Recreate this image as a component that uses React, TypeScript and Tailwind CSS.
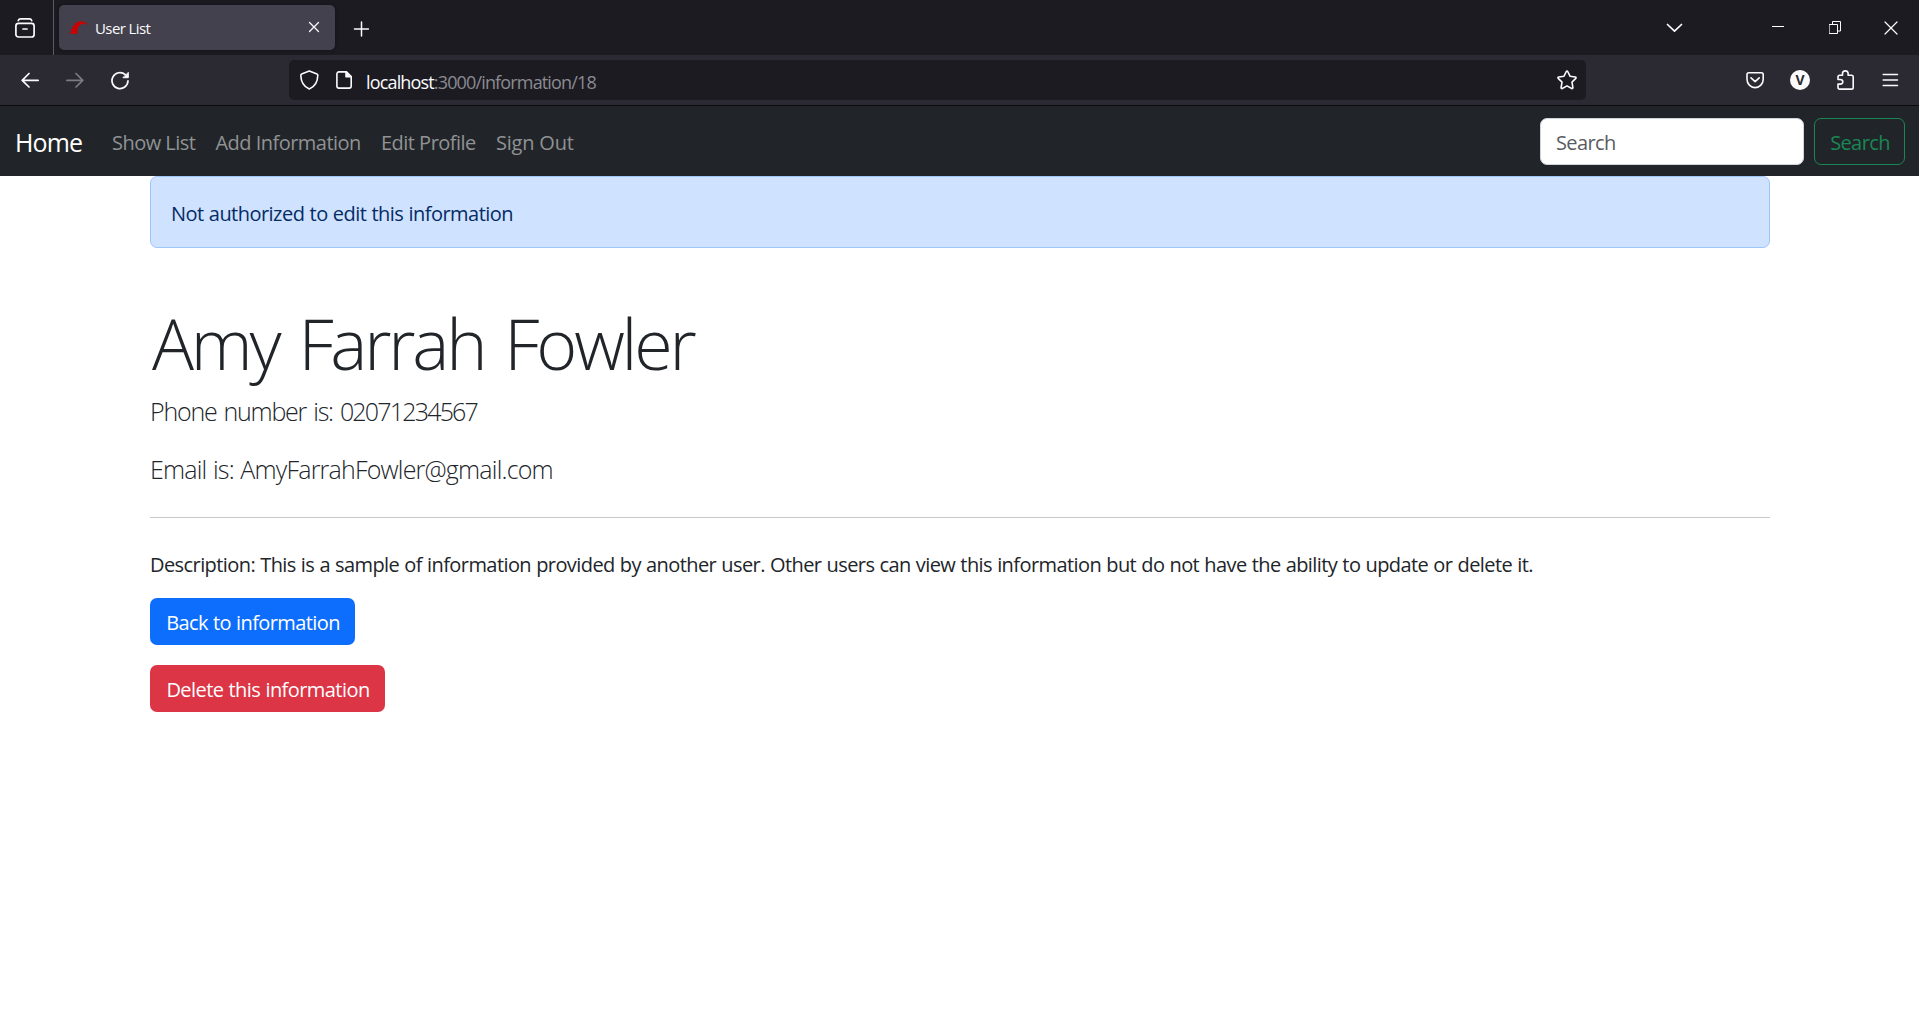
import type { ReactNode } from "react";

type IconProps = { w: number; h: number; className?: string; sw?: number; children: ReactNode };

function Icon({ w, h, className = "", sw = 1.5, children }: IconProps) {
  return (
    <svg
      width={w}
      height={h}
      viewBox={`0 0 ${w} ${h}`}
      fill="none"
      stroke="currentColor"
      strokeWidth={sw}
      strokeLinecap="round"
      strokeLinejoin="round"
      className={`block shrink-0 ${className}`}
    >
      {children}
    </svg>
  );
}

function TabStrip() {
  return (
    <div className="flex h-[55px] items-start bg-[#1c1b22] text-[#fbfbfe]">
      <div className="h-[55px] w-[54px] shrink-0 border-r border-[#5b5b66] pl-[15px] pt-[18px]">
        <Icon w={20} h={20} sw={1.7}>
          <path d="M3.300 2.600C3.700 1.400 4.500.9 5.600.9h8.800c1.100 0 1.900.5 2.300 1.700" />
          <rect x="0.900" y="5.400" width="18.200" height="13.600" rx="2.600" />
          <path d="M8 11h4" />
        </Icon>
      </div>
      <div className="ml-[5px] mt-[5px] flex h-[45px] w-[276px] shrink-0 items-start rounded-[5px] bg-[#42414d] pl-2.5 shadow-[0_0_4px_rgba(0,0,0,0.4)]">
        <svg width="20" height="13" viewBox="0 0 20 13" className="mt-4 block shrink-0" fill="#cc0000">
          <path d="M1.800 12.800C2.600 8 5 3.200 9 1.300 12.500-.2 16.500.6 19.500 4.200 16.500 2.600 13.500 2.300 11.200 4 8.500 6 7.800 9.500 8.800 12.800Z" />
          <path d="M.3 11.300l1.200.3-.2 1.200H.2zM1.400 7.900l1.100.5-.5 1.200-1-.5zM3.400 4.400l.9.8-.8 1-.8-.8zM6.400 1.600l.6 1-1 .7-.6-.9zM10.300.1l.2 1-1.200.3-.2-1zM14.200.2l-.3.9-1.100-.2.200-.9z" />
        </svg>
        <span className="ml-1.5 mt-[8px] w-[213px] text-[15px] leading-[30px] tracking-[-0.600px]">User List</span>
        <Icon w={12} h={12} className="mt-[16px]" sw={1.300}>
          <path d="M1.500 1.500l9 9M10.500 1.500l-9 9" />
        </Icon>
      </div>
      <Icon w={16} h={16} className="ml-[18px] mt-[21px]" sw={1.500}>
        <path d="M8.500 1v14M1.500 8h14" />
      </Icon>
      <div className="ml-auto flex">
        <Icon w={17} h={12} className="mr-[89px] mt-[22px]" sw={1.700}>
          <path d="M1.500 2.500l7 6.700 7-6.700" />
        </Icon>
        <div className="mr-[45px] mt-[26px] h-px w-3 bg-white" />
        <Icon w={12} h={13} className="mr-[43px] mt-[21px]" sw={1}>
          <g strokeLinejoin="miter">
            <path d="M.5 3.500h8v9h-8z" />
            <path d="M3.500 3.500v-3h8v9.500h-3" />
          </g>
        </Icon>
        <Icon w={14} h={14} className="mr-[21px] mt-[20.5px]" sw={1.200}>
          <path d="M1 1l12 12M13 1L1 13" />
        </Icon>
      </div>
    </div>
  );
}

function Toolbar() {
  return (
    <div className="flex h-[51px] items-start border-b border-[#0c0c0d] bg-[#2b2a33] text-[#fbfbfe]">
      <Icon w={18} h={16} className="ml-[21px] mt-[17px]" sw={1.700}>
        <path d="M17.200 8.300H1.200M8 1.500L1.200 8.300 8 15" />
      </Icon>
      <Icon w={18} h={16} className="ml-[27px] mt-[17px] text-[#7c7b82]" sw={1.700}>
        <path d="M.8 8.300h16M10 1.500l6.800 6.800L10 15" />
      </Icon>
      <Icon w={19} h={19} className="ml-[27px] mt-[15.5px]" sw={1.700}>
        <path d="M17 9.800A8 8 0 1 1 14.300 3.600" />
        <path d="M17.300 1.700v5h-5z" fill="currentColor" strokeWidth="1" />
      </Icon>
      <div className="ml-[159px] mt-[5px] flex h-10 w-[1297px] items-start rounded-[5px] bg-[#1c1b22] pl-[11px]">
        <Icon w={19} h={20} className="mt-[10px]" sw={1.600}>
          <path d="M9.300 1L17 4c.6.2.8.600.8 1.200-.1 5.800-2.800 11.300-8.500 13.800C3.600 16.500.9 11 .8 5.200.8 4.600 1 4.200 1.600 4z" />
        </Icon>
        <Icon w={16} h={18} className="ml-[17px] mt-[11px]" sw={1.600}>
          <path d="M3 .9h7.500l4.700 4.700V15c0 1.300-.8 2.100-2.100 2.100H3c-1.300 0-2.100-.8-2.100-2.100V3C.9 1.700 1.700.9 3 .9z" />
          <path d="M10 1.200v4.500h4.800z" fill="currentColor" />
        </Icon>
        <div className="ml-[14px] flex-1 whitespace-nowrap pt-[7px] text-[18px] leading-[30px]">
          <span className="tracking-[-0.840px]">localhost</span>
          <span className="tracking-[-0.850px] text-[#8b8a91]">:3000/information/18</span>
        </div>
        <Icon w={20} h={20} className="mr-[9px] mt-[10px]" sw={1.600}>
          <path d="M9.300 1.500c.3-.6 1.100-.6 1.400 0l2.300 4.700 5.300.8c.7.1 1 .9.500 1.400L15 12.100l.9 5.500c.1.700-.6 1.200-1.200.9L10 15.900l-4.700 2.600c-.6.3-1.300-.2-1.200-.9l.9-5.500-3.800-3.700c-.5-.5-.2-1.300.5-1.400l5.300-.8z" />
        </Icon>
      </div>
      <div className="ml-auto flex items-start">
        <Icon w={19} h={17} className="mt-[16.500px]" sw={1.600}>
          <path d="M2.700.8h12.800c1.100 0 1.700.6 1.700 1.700v4.700c0 4.700-3.600 8.400-8.100 8.400S1 11.900 1 7.200V2.500C1 1.400 1.600.8 2.700.8z" />
          <path d="M5 5.800l4.100 3.900 4.100-3.900" />
        </Icon>
        <div className="ml-[25px] mt-[15px] grid size-5 place-items-center rounded-full bg-[#fbfbfe]">
          <span className="text-[14px] font-bold leading-5 text-[#2b2a33]">V</span>
        </div>
        <Icon w={18} h={20} className="ml-[27px] mt-[15px]" sw={1.600}>
          <path d="M5.500 5.200V3.600C5.500 2 6.800.9 8.300.9s2.800 1.100 2.800 2.700v1.600h3.400c1.100 0 1.700.6 1.700 1.700v10.500c0 1.100-.6 1.700-1.700 1.700H2.700c-1.100 0-1.700-.6-1.700-1.700v-3.300h2.200c1.500 0 2.600-1 2.600-2.300s-1.100-2.300-2.600-2.300H1V6.900c0-1.100.6-1.700 1.700-1.700z" />
        </Icon>
        <Icon w={17} h={14} className="ml-[27px] mr-[20px] mt-[17.5px]" sw={1.500}>
          <path d="M1.200 1.500h14.300M1.200 7h14.300M1.200 12.500h14.300" />
        </Icon>
      </div>
    </div>
  );
}

function Navbar() {
  return (
    <nav className="flex h-[70px] items-start bg-[#212529] text-[20px] leading-[30px] text-[#909294]">
      <a className="ml-[13px] mt-[21px] w-[99px] pl-0.5 text-[25px] tracking-[-0.900px] text-white">Home</a>
      <div className="mt-[21px] flex gap-[20px] whitespace-nowrap pt-px">
        <a className="w-[83.500px] tracking-[-0.520px]">Show List</a>
        <a className="w-[145.500px] tracking-[-0.530px]">Add Information</a>
        <a className="w-[95px] tracking-[-0.520px]">Edit Profile</a>
        <a className="tracking-[-0.200px]">Sign Out</a>
      </div>
      <div className="ml-auto mr-[14px] mt-3 flex gap-2.5">
        <div className="h-[47px] w-[264px] rounded-[7px] border border-[#ced4da] bg-white pl-[15px] pt-[9px] tracking-[-0.600px] text-[#595c5f]">
          Search
        </div>
        <button className="h-[47px] w-[91px] rounded-[7px] border border-[#198754] pl-[1px] pt-0.5 leading-[30px] tracking-[-0.600px] text-[#198754]">
          Search
        </button>
      </div>
    </nav>
  );
}

export default function App() {
  return (
    <div className="min-h-[1019px] bg-white font-['Open_Sans',sans-serif]">
      <TabStrip />
      <Toolbar />
      <Navbar />
      <main className="ml-[150px] w-[1620px] whitespace-nowrap text-[20px] leading-[30px] text-[#212529]">
        <div className="h-[72px] rounded-[7px] border border-[#9ec5fe] bg-[#cfe2ff] pl-[20px] pt-[22px] tracking-[-0.530px] text-[#052c65] [word-spacing:0.5px]">
          Not authorized to edit this information
        </div>
        <h1 className="mt-[52px] h-[92px] pl-[2px] pt-px text-[70px] font-light leading-[84px] tracking-[-3.200px] [word-spacing:5px]">
          Amy Farrah Fowler
        </h1>
        <p className="h-[58px] pt-px text-[25px] font-light leading-[37px] tracking-[-1.220px] [word-spacing:1.800px]">
          Phone number is: <span className="tracking-[-1.800px]">02071234567</span>
        </p>
        <p className="h-[67px] pt-px text-[25px] font-light leading-[37px] tracking-[-0.800px] [word-spacing:0.800px]">
          Email is: AmyFarrahFowler@gmail.com
        </p>
        <hr className="border-[#c7c8c9]" />
        <p className="mt-[32px] h-[48px] tracking-[-0.580px] [word-spacing:0.500px]">
          Description: This is a sample of information provided by another user. Other users can view this information but
          do not have the ability to update or delete it.
        </p>
        <button className="block h-[47px] w-[205px] rounded-[7px] bg-[#0d6efd] pl-px pt-0.5 tracking-[-0.600px] text-white [word-spacing:0.500px]">
          Back to information
        </button>
        <button className="mt-5 block h-[47px] w-[235px] rounded-[7px] bg-[#dc3545] pl-px pt-0.5 tracking-[-0.560px] text-white [word-spacing:0.500px]">
          Delete this information
        </button>
      </main>
    </div>
  );
}
